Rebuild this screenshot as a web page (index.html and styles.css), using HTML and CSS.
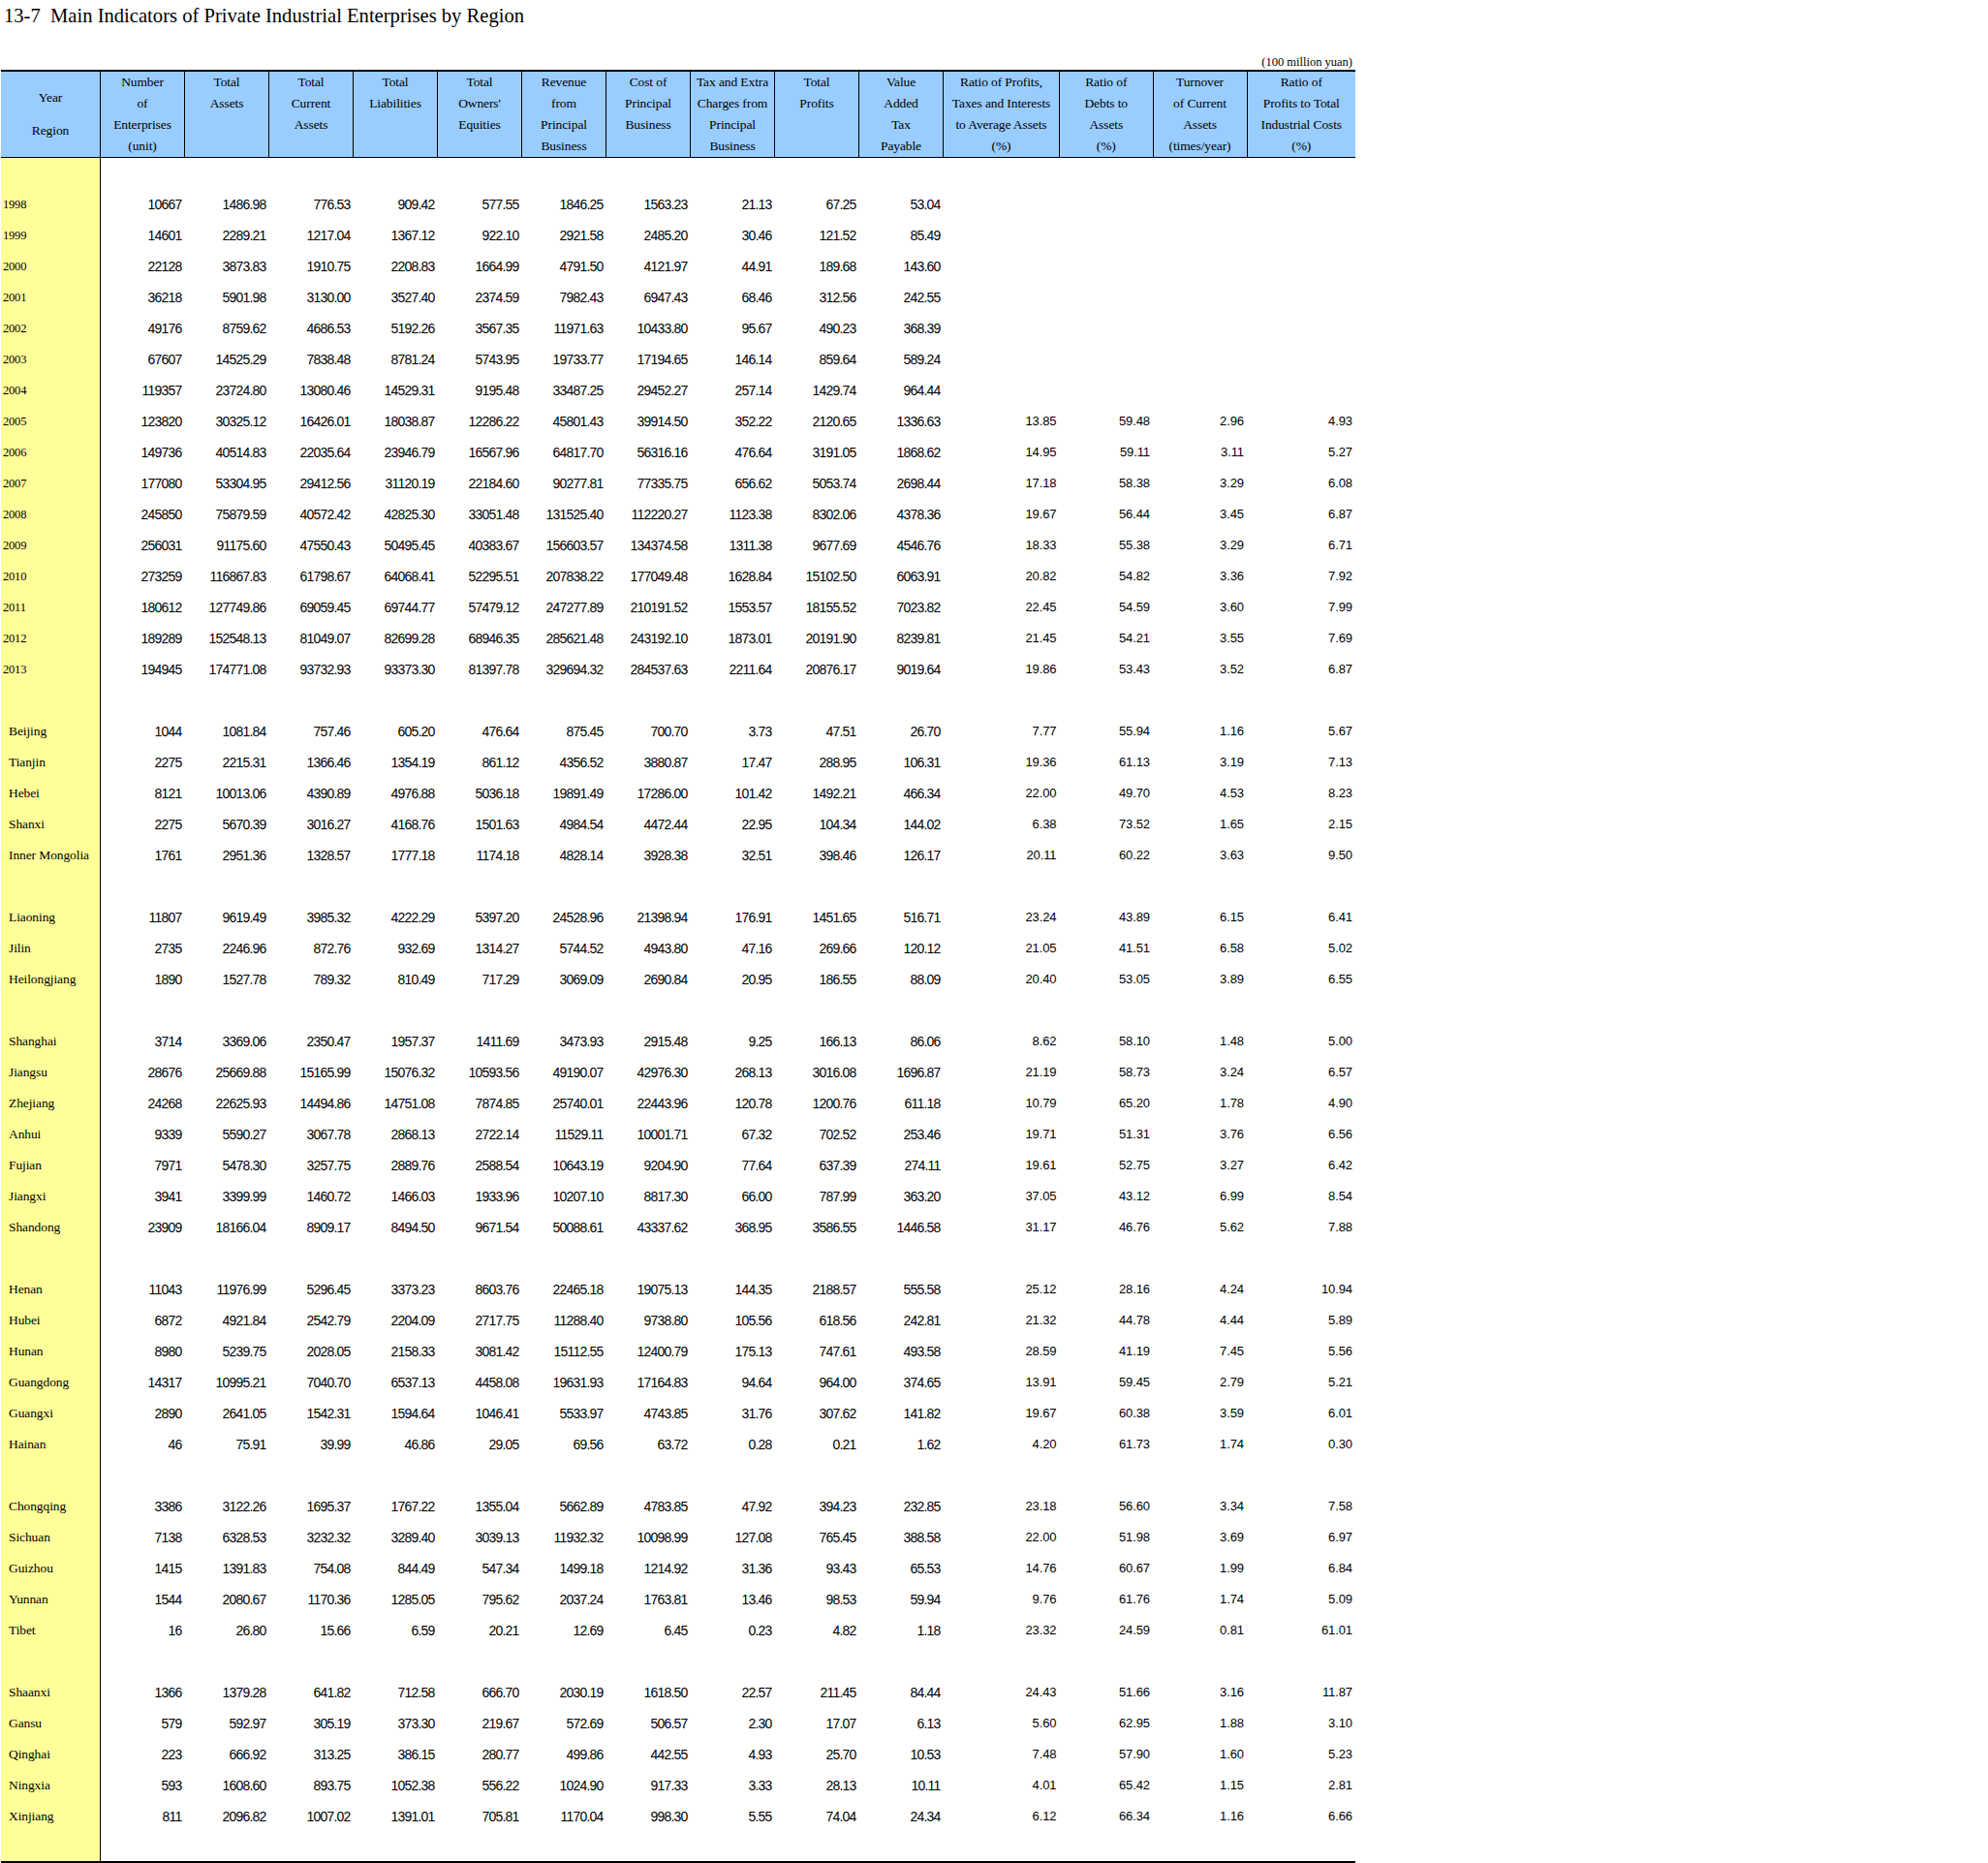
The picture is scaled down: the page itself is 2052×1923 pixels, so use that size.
FILE: index.html
```html
<!DOCTYPE html>
<html lang="en">
<head>
<meta charset="utf-8">
<title>13-7 Main Indicators of Private Industrial Enterprises by Region</title>
<link rel="stylesheet" href="styles.css">
</head>
<body>
<h1 class="title">13-7&nbsp; Main Indicators of Private Industrial Enterprises by Region</h1>
<div class="sheet">
<p class="unit">(100 million yuan)</p>
<table class="data">
<colgroup><col class="c-stub"><col class="c-n"><col class="c-n"><col class="c-n"><col class="c-n"><col class="c-n"><col class="c-n"><col class="c-n"><col class="c-n"><col class="c-n"><col class="c-n"><col class="c-a"><col class="c-b"><col class="c-c"><col class="c-d"></colgroup>
<thead>
<tr>
<th class="stub-head"><span>Year</span><span>Region</span></th>
<th>Number<br>of<br>Enterprises<br>(unit)</th>
<th>Total<br>Assets</th>
<th>Total<br>Current<br>Assets</th>
<th>Total<br>Liabilities</th>
<th>Total<br>Owners'<br>Equities</th>
<th>Revenue<br>from<br>Principal<br>Business</th>
<th>Cost of<br>Principal<br>Business</th>
<th>Tax and Extra<br>Charges from<br>Principal<br>Business</th>
<th>Total<br>Profits</th>
<th>Value<br>Added<br>Tax<br>Payable</th>
<th>Ratio of Profits,<br>Taxes and Interests<br>to Average Assets<br>(%)</th>
<th>Ratio of<br>Debts to<br>Assets<br>(%)</th>
<th>Turnover<br>of Current<br>Assets<br>(times/year)</th>
<th>Ratio of<br>Profits to Total<br>Industrial Costs<br>(%)</th>
</tr>
</thead>
<tbody>
<tr class="gap"><th></th><td colspan="14"></td></tr>
<tr><th class="year">1998</th><td>10667</td><td>1486.98</td><td>776.53</td><td>909.42</td><td>577.55</td><td>1846.25</td><td>1563.23</td><td>21.13</td><td>67.25</td><td>53.04</td><td></td><td></td><td></td><td></td></tr>
<tr><th class="year">1999</th><td>14601</td><td>2289.21</td><td>1217.04</td><td>1367.12</td><td>922.10</td><td>2921.58</td><td>2485.20</td><td>30.46</td><td>121.52</td><td>85.49</td><td></td><td></td><td></td><td></td></tr>
<tr><th class="year">2000</th><td>22128</td><td>3873.83</td><td>1910.75</td><td>2208.83</td><td>1664.99</td><td>4791.50</td><td>4121.97</td><td>44.91</td><td>189.68</td><td>143.60</td><td></td><td></td><td></td><td></td></tr>
<tr><th class="year">2001</th><td>36218</td><td>5901.98</td><td>3130.00</td><td>3527.40</td><td>2374.59</td><td>7982.43</td><td>6947.43</td><td>68.46</td><td>312.56</td><td>242.55</td><td></td><td></td><td></td><td></td></tr>
<tr><th class="year">2002</th><td>49176</td><td>8759.62</td><td>4686.53</td><td>5192.26</td><td>3567.35</td><td>11971.63</td><td>10433.80</td><td>95.67</td><td>490.23</td><td>368.39</td><td></td><td></td><td></td><td></td></tr>
<tr><th class="year">2003</th><td>67607</td><td>14525.29</td><td>7838.48</td><td>8781.24</td><td>5743.95</td><td>19733.77</td><td>17194.65</td><td>146.14</td><td>859.64</td><td>589.24</td><td></td><td></td><td></td><td></td></tr>
<tr><th class="year">2004</th><td>119357</td><td>23724.80</td><td>13080.46</td><td>14529.31</td><td>9195.48</td><td>33487.25</td><td>29452.27</td><td>257.14</td><td>1429.74</td><td>964.44</td><td></td><td></td><td></td><td></td></tr>
<tr><th class="year">2005</th><td>123820</td><td>30325.12</td><td>16426.01</td><td>18038.87</td><td>12286.22</td><td>45801.43</td><td>39914.50</td><td>352.22</td><td>2120.65</td><td>1336.63</td><td>13.85</td><td>59.48</td><td>2.96</td><td>4.93</td></tr>
<tr><th class="year">2006</th><td>149736</td><td>40514.83</td><td>22035.64</td><td>23946.79</td><td>16567.96</td><td>64817.70</td><td>56316.16</td><td>476.64</td><td>3191.05</td><td>1868.62</td><td>14.95</td><td>59.11</td><td>3.11</td><td>5.27</td></tr>
<tr><th class="year">2007</th><td>177080</td><td>53304.95</td><td>29412.56</td><td>31120.19</td><td>22184.60</td><td>90277.81</td><td>77335.75</td><td>656.62</td><td>5053.74</td><td>2698.44</td><td>17.18</td><td>58.38</td><td>3.29</td><td>6.08</td></tr>
<tr><th class="year">2008</th><td>245850</td><td>75879.59</td><td>40572.42</td><td>42825.30</td><td>33051.48</td><td>131525.40</td><td>112220.27</td><td>1123.38</td><td>8302.06</td><td>4378.36</td><td>19.67</td><td>56.44</td><td>3.45</td><td>6.87</td></tr>
<tr><th class="year">2009</th><td>256031</td><td>91175.60</td><td>47550.43</td><td>50495.45</td><td>40383.67</td><td>156603.57</td><td>134374.58</td><td>1311.38</td><td>9677.69</td><td>4546.76</td><td>18.33</td><td>55.38</td><td>3.29</td><td>6.71</td></tr>
<tr><th class="year">2010</th><td>273259</td><td>116867.83</td><td>61798.67</td><td>64068.41</td><td>52295.51</td><td>207838.22</td><td>177049.48</td><td>1628.84</td><td>15102.50</td><td>6063.91</td><td>20.82</td><td>54.82</td><td>3.36</td><td>7.92</td></tr>
<tr><th class="year">2011</th><td>180612</td><td>127749.86</td><td>69059.45</td><td>69744.77</td><td>57479.12</td><td>247277.89</td><td>210191.52</td><td>1553.57</td><td>18155.52</td><td>7023.82</td><td>22.45</td><td>54.59</td><td>3.60</td><td>7.99</td></tr>
<tr><th class="year">2012</th><td>189289</td><td>152548.13</td><td>81049.07</td><td>82699.28</td><td>68946.35</td><td>285621.48</td><td>243192.10</td><td>1873.01</td><td>20191.90</td><td>8239.81</td><td>21.45</td><td>54.21</td><td>3.55</td><td>7.69</td></tr>
<tr><th class="year">2013</th><td>194945</td><td>174771.08</td><td>93732.93</td><td>93373.30</td><td>81397.78</td><td>329694.32</td><td>284537.63</td><td>2211.64</td><td>20876.17</td><td>9019.64</td><td>19.86</td><td>53.43</td><td>3.52</td><td>6.87</td></tr>
<tr class="gap"><th></th><td colspan="14"></td></tr>
<tr><th>Beijing</th><td>1044</td><td>1081.84</td><td>757.46</td><td>605.20</td><td>476.64</td><td>875.45</td><td>700.70</td><td>3.73</td><td>47.51</td><td>26.70</td><td>7.77</td><td>55.94</td><td>1.16</td><td>5.67</td></tr>
<tr><th>Tianjin</th><td>2275</td><td>2215.31</td><td>1366.46</td><td>1354.19</td><td>861.12</td><td>4356.52</td><td>3880.87</td><td>17.47</td><td>288.95</td><td>106.31</td><td>19.36</td><td>61.13</td><td>3.19</td><td>7.13</td></tr>
<tr><th>Hebei</th><td>8121</td><td>10013.06</td><td>4390.89</td><td>4976.88</td><td>5036.18</td><td>19891.49</td><td>17286.00</td><td>101.42</td><td>1492.21</td><td>466.34</td><td>22.00</td><td>49.70</td><td>4.53</td><td>8.23</td></tr>
<tr><th>Shanxi</th><td>2275</td><td>5670.39</td><td>3016.27</td><td>4168.76</td><td>1501.63</td><td>4984.54</td><td>4472.44</td><td>22.95</td><td>104.34</td><td>144.02</td><td>6.38</td><td>73.52</td><td>1.65</td><td>2.15</td></tr>
<tr><th>Inner Mongolia</th><td>1761</td><td>2951.36</td><td>1328.57</td><td>1777.18</td><td>1174.18</td><td>4828.14</td><td>3928.38</td><td>32.51</td><td>398.46</td><td>126.17</td><td>20.11</td><td>60.22</td><td>3.63</td><td>9.50</td></tr>
<tr class="gap"><th></th><td colspan="14"></td></tr>
<tr><th>Liaoning</th><td>11807</td><td>9619.49</td><td>3985.32</td><td>4222.29</td><td>5397.20</td><td>24528.96</td><td>21398.94</td><td>176.91</td><td>1451.65</td><td>516.71</td><td>23.24</td><td>43.89</td><td>6.15</td><td>6.41</td></tr>
<tr><th>Jilin</th><td>2735</td><td>2246.96</td><td>872.76</td><td>932.69</td><td>1314.27</td><td>5744.52</td><td>4943.80</td><td>47.16</td><td>269.66</td><td>120.12</td><td>21.05</td><td>41.51</td><td>6.58</td><td>5.02</td></tr>
<tr><th>Heilongjiang</th><td>1890</td><td>1527.78</td><td>789.32</td><td>810.49</td><td>717.29</td><td>3069.09</td><td>2690.84</td><td>20.95</td><td>186.55</td><td>88.09</td><td>20.40</td><td>53.05</td><td>3.89</td><td>6.55</td></tr>
<tr class="gap"><th></th><td colspan="14"></td></tr>
<tr><th>Shanghai</th><td>3714</td><td>3369.06</td><td>2350.47</td><td>1957.37</td><td>1411.69</td><td>3473.93</td><td>2915.48</td><td>9.25</td><td>166.13</td><td>86.06</td><td>8.62</td><td>58.10</td><td>1.48</td><td>5.00</td></tr>
<tr><th>Jiangsu</th><td>28676</td><td>25669.88</td><td>15165.99</td><td>15076.32</td><td>10593.56</td><td>49190.07</td><td>42976.30</td><td>268.13</td><td>3016.08</td><td>1696.87</td><td>21.19</td><td>58.73</td><td>3.24</td><td>6.57</td></tr>
<tr><th>Zhejiang</th><td>24268</td><td>22625.93</td><td>14494.86</td><td>14751.08</td><td>7874.85</td><td>25740.01</td><td>22443.96</td><td>120.78</td><td>1200.76</td><td>611.18</td><td>10.79</td><td>65.20</td><td>1.78</td><td>4.90</td></tr>
<tr><th>Anhui</th><td>9339</td><td>5590.27</td><td>3067.78</td><td>2868.13</td><td>2722.14</td><td>11529.11</td><td>10001.71</td><td>67.32</td><td>702.52</td><td>253.46</td><td>19.71</td><td>51.31</td><td>3.76</td><td>6.56</td></tr>
<tr><th>Fujian</th><td>7971</td><td>5478.30</td><td>3257.75</td><td>2889.76</td><td>2588.54</td><td>10643.19</td><td>9204.90</td><td>77.64</td><td>637.39</td><td>274.11</td><td>19.61</td><td>52.75</td><td>3.27</td><td>6.42</td></tr>
<tr><th>Jiangxi</th><td>3941</td><td>3399.99</td><td>1460.72</td><td>1466.03</td><td>1933.96</td><td>10207.10</td><td>8817.30</td><td>66.00</td><td>787.99</td><td>363.20</td><td>37.05</td><td>43.12</td><td>6.99</td><td>8.54</td></tr>
<tr><th>Shandong</th><td>23909</td><td>18166.04</td><td>8909.17</td><td>8494.50</td><td>9671.54</td><td>50088.61</td><td>43337.62</td><td>368.95</td><td>3586.55</td><td>1446.58</td><td>31.17</td><td>46.76</td><td>5.62</td><td>7.88</td></tr>
<tr class="gap"><th></th><td colspan="14"></td></tr>
<tr><th>Henan</th><td>11043</td><td>11976.99</td><td>5296.45</td><td>3373.23</td><td>8603.76</td><td>22465.18</td><td>19075.13</td><td>144.35</td><td>2188.57</td><td>555.58</td><td>25.12</td><td>28.16</td><td>4.24</td><td>10.94</td></tr>
<tr><th>Hubei</th><td>6872</td><td>4921.84</td><td>2542.79</td><td>2204.09</td><td>2717.75</td><td>11288.40</td><td>9738.80</td><td>105.56</td><td>618.56</td><td>242.81</td><td>21.32</td><td>44.78</td><td>4.44</td><td>5.89</td></tr>
<tr><th>Hunan</th><td>8980</td><td>5239.75</td><td>2028.05</td><td>2158.33</td><td>3081.42</td><td>15112.55</td><td>12400.79</td><td>175.13</td><td>747.61</td><td>493.58</td><td>28.59</td><td>41.19</td><td>7.45</td><td>5.56</td></tr>
<tr><th>Guangdong</th><td>14317</td><td>10995.21</td><td>7040.70</td><td>6537.13</td><td>4458.08</td><td>19631.93</td><td>17164.83</td><td>94.64</td><td>964.00</td><td>374.65</td><td>13.91</td><td>59.45</td><td>2.79</td><td>5.21</td></tr>
<tr><th>Guangxi</th><td>2890</td><td>2641.05</td><td>1542.31</td><td>1594.64</td><td>1046.41</td><td>5533.97</td><td>4743.85</td><td>31.76</td><td>307.62</td><td>141.82</td><td>19.67</td><td>60.38</td><td>3.59</td><td>6.01</td></tr>
<tr><th>Hainan</th><td>46</td><td>75.91</td><td>39.99</td><td>46.86</td><td>29.05</td><td>69.56</td><td>63.72</td><td>0.28</td><td>0.21</td><td>1.62</td><td>4.20</td><td>61.73</td><td>1.74</td><td>0.30</td></tr>
<tr class="gap"><th></th><td colspan="14"></td></tr>
<tr><th>Chongqing</th><td>3386</td><td>3122.26</td><td>1695.37</td><td>1767.22</td><td>1355.04</td><td>5662.89</td><td>4783.85</td><td>47.92</td><td>394.23</td><td>232.85</td><td>23.18</td><td>56.60</td><td>3.34</td><td>7.58</td></tr>
<tr><th>Sichuan</th><td>7138</td><td>6328.53</td><td>3232.32</td><td>3289.40</td><td>3039.13</td><td>11932.32</td><td>10098.99</td><td>127.08</td><td>765.45</td><td>388.58</td><td>22.00</td><td>51.98</td><td>3.69</td><td>6.97</td></tr>
<tr><th>Guizhou</th><td>1415</td><td>1391.83</td><td>754.08</td><td>844.49</td><td>547.34</td><td>1499.18</td><td>1214.92</td><td>31.36</td><td>93.43</td><td>65.53</td><td>14.76</td><td>60.67</td><td>1.99</td><td>6.84</td></tr>
<tr><th>Yunnan</th><td>1544</td><td>2080.67</td><td>1170.36</td><td>1285.05</td><td>795.62</td><td>2037.24</td><td>1763.81</td><td>13.46</td><td>98.53</td><td>59.94</td><td>9.76</td><td>61.76</td><td>1.74</td><td>5.09</td></tr>
<tr><th>Tibet</th><td>16</td><td>26.80</td><td>15.66</td><td>6.59</td><td>20.21</td><td>12.69</td><td>6.45</td><td>0.23</td><td>4.82</td><td>1.18</td><td>23.32</td><td>24.59</td><td>0.81</td><td>61.01</td></tr>
<tr class="gap"><th></th><td colspan="14"></td></tr>
<tr><th>Shaanxi</th><td>1366</td><td>1379.28</td><td>641.82</td><td>712.58</td><td>666.70</td><td>2030.19</td><td>1618.50</td><td>22.57</td><td>211.45</td><td>84.44</td><td>24.43</td><td>51.66</td><td>3.16</td><td>11.87</td></tr>
<tr><th>Gansu</th><td>579</td><td>592.97</td><td>305.19</td><td>373.30</td><td>219.67</td><td>572.69</td><td>506.57</td><td>2.30</td><td>17.07</td><td>6.13</td><td>5.60</td><td>62.95</td><td>1.88</td><td>3.10</td></tr>
<tr><th>Qinghai</th><td>223</td><td>666.92</td><td>313.25</td><td>386.15</td><td>280.77</td><td>499.86</td><td>442.55</td><td>4.93</td><td>25.70</td><td>10.53</td><td>7.48</td><td>57.90</td><td>1.60</td><td>5.23</td></tr>
<tr><th>Ningxia</th><td>593</td><td>1608.60</td><td>893.75</td><td>1052.38</td><td>556.22</td><td>1024.90</td><td>917.33</td><td>3.33</td><td>28.13</td><td>10.11</td><td>4.01</td><td>65.42</td><td>1.15</td><td>2.81</td></tr>
<tr><th>Xinjiang</th><td>811</td><td>2096.82</td><td>1007.02</td><td>1391.01</td><td>705.81</td><td>1170.04</td><td>998.30</td><td>5.55</td><td>74.04</td><td>24.34</td><td>6.12</td><td>66.34</td><td>1.16</td><td>6.66</td></tr>
<tr class="gap"><th></th><td colspan="14"></td></tr>
</tbody>
</table>
</div>
</body>
</html>
```

FILE: styles.css
```css
html, body {
  margin: 0;
  background: #fff;
  color: #000;
}

.title {
  margin: 0;
  padding: 3px 0 0 4px;
  height: 41px;
  font: 400 20.6px/26px "Liberation Serif", serif;
}

.sheet {
  width: 1398px;
  margin-left: 1px;
}

.unit {
  margin: 0;
  height: 28px;
  padding: 12px 3px 0 0;
  box-sizing: border-box;
  text-align: right;
  font: 12.5px/16px "Liberation Serif", serif;
}

.data {
  width: 1398px;
  table-layout: fixed;
  border-collapse: collapse;
  border-bottom: 3px solid #000;
}

.c-stub { width: 102.5px; }
.c-n { width: 87px; }
.c-a { width: 120px; }
.c-b { width: 96.5px; }
.c-c { width: 97px; }
.c-d { width: 112px; }

.data thead tr {
  border-top: 2px solid #000;
  border-bottom: 1px solid #000;
}

.data thead th {
  height: 88px;
  padding: 0;
  vertical-align: top;
  background: #99ccff;
  border-left: 1px solid #000;
  font: 400 13.5px/22px "Liberation Serif", serif;
  letter-spacing: -0.1px;
  text-align: center;
  white-space: nowrap;
}

.data thead th:first-child {
  border-left: 0;
}

.data thead .stub-head {
  vertical-align: middle;
}

.stub-head span {
  display: block;
  line-height: 34px;
}

.data tbody tr {
  height: 32px;
}

.data tbody th {
  padding: 0 0 0 8px;
  background: #ffff99;
  border-right: 1px solid #000;
  font: 400 13.5px/16px "Liberation Serif", serif;
  letter-spacing: -0.1px;
  text-align: left;
  white-space: nowrap;
}

.data tbody th.year {
  padding-left: 2px;
  font-size: 12.5px;
  letter-spacing: -0.2px;
}

.data td {
  padding: 0 3px 0 0;
  font: 14px/16px "Liberation Sans", sans-serif;
  letter-spacing: -0.8px;
  text-align: right;
  white-space: nowrap;
}

.data td:nth-child(n+12) {
  font-size: 13px;
  letter-spacing: -0.1px;
}
```
